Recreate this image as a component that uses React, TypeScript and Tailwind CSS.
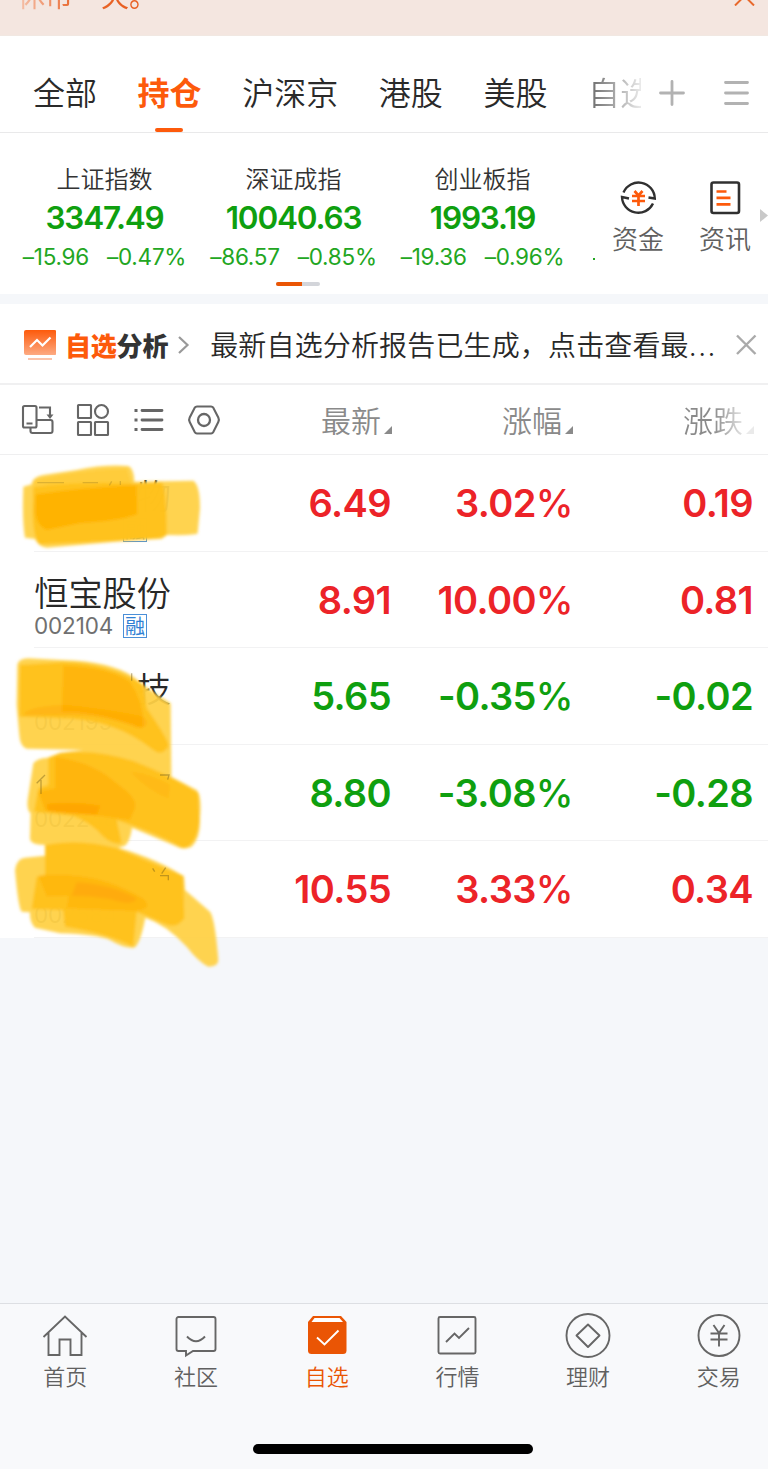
import React from "react";

const tabs = ["全部", "持仓", "沪深京", "港股", "美股"];

const indices = [
  { name: "上证指数", value: "3347.49", diff: "–15.96", pct: "–0.47%" },
  { name: "深证成指", value: "10040.63", diff: "–86.57", pct: "–0.85%" },
  { name: "创业板指", value: "1993.19", diff: "–19.36", pct: "–0.96%" },
];

const stocks = [
  { name: "物", code: "", price: "6.49", pct: "3.02", change: "0.19", up: true, badge: true },
  { name: "恒宝股份", code: "002104", price: "8.91", pct: "10.00", change: "0.81", up: true, badge: true },
  { name: "技", code: "002195", price: "5.65", pct: "-0.35", change: "-0.02", up: false, badge: false },
  { name: "", code: "002248", price: "8.80", pct: "-3.08", change: "-0.28", up: false, badge: false },
  { name: "", code: "002584", price: "10.55", pct: "3.33", change: "0.34", up: true, badge: false },
];

const Banner = () => (
  <div className="relative h-9 overflow-hidden border-b border-[#f1e8e2] bg-[#f4e6e0]">
    <p className="absolute -top-[25px] left-[17px] bg-linear-to-r from-[#f4c4ad] via-[#e8692c] via-40% to-[#e8591a] bg-clip-text text-[28px] leading-10 text-transparent">
      休市一天。
    </p>
    <svg className="absolute top-0 right-3 h-[6px] w-6" viewBox="0 0 24 6" fill="none" stroke="#e8692c" strokeWidth="2">
      <path d="M3 5.5L12.5 -4L22 5.5" />
    </svg>
  </div>
);

const TabBar = () => (
  <div className="flex h-[97px] items-center border-b border-[#e9e9ea] bg-white pl-[33px]">
    <div className="flex h-full w-[608px] shrink-0 gap-[40.6px] overflow-hidden text-[32px] leading-[110px] font-[350] text-[#2a2a2a]">
      {tabs.map((tab) =>
        tab === "持仓" ? (
          <div key={tab} className="relative shrink-0 font-bold text-[#fd5a0b]">
            {tab}
            <span className="absolute bottom-0 left-[17.5px] h-1 w-7 rounded-xs bg-[#fd5a0b]" />
          </div>
        ) : (
          <div key={tab} className="shrink-0">
            {tab}
          </div>
        )
      )}
      <div className="shrink-0 bg-linear-to-r from-[#777] from-10% to-white to-95% bg-clip-text text-transparent">
        自选
      </div>
    </div>
    <svg className="mt-[17px] ml-[17px] h-7 w-7 shrink-0" viewBox="0 0 28 28" stroke="#b2b2b2" strokeWidth="2.8" strokeLinecap="round">
      <path d="M2.5 14h23M14 2.5v23" />
    </svg>
    <svg className="mt-[17px] ml-[37px] h-7 w-7 shrink-0" viewBox="0 0 28 28" stroke="#b2b2b2" strokeWidth="2.8" strokeLinecap="round">
      <path d="M2.5 3.5h22M2.5 14h22M2.5 24.5h22" />
    </svg>
  </div>
);

const Indices = () => (
  <div className="relative flex h-[161px] bg-white">
    <div className="flex w-[600px] shrink-0 pl-[10px]">
      {indices.map((item) => (
        <div key={item.name} className="flex w-[189px] shrink-0 flex-col items-center pt-[30px] whitespace-nowrap">
          <div className="h-[30px] text-[24px] leading-[30px] font-[350] text-[#333]">{item.name}</div>
          <div className="mt-[6px] h-[38px] font-[Inter] text-[31.500px] leading-[38px] font-semibold tracking-[-1.200px] text-[#0f9f0f]">
            {item.value}
          </div>
          <div className="mt-[6px] flex h-7 gap-[18px] font-[Inter] text-[22.500px] leading-7 tracking-[-0.250px] text-[#22a622]">
            <span>{item.diff}</span>
            <span>{item.pct}</span>
          </div>
        </div>
      ))}
      <span className="mt-[125px] ml-4 h-0.5 w-0.5 shrink-0 bg-[#22a622]" />
    </div>
    <div className="mt-[45px] ml-3 w-[52px] shrink-0 text-center">
      <svg className="mx-auto h-10 w-10" viewBox="0 0 40 40" fill="none" stroke="#303030" strokeWidth="2.4">
        <path d="M5.500 14.500A16.300 16.300 0 0 1 36.800 20.500L30.500 19.500" />
        <path d="M35 25.500A16.300 16.300 0 0 1 4 19L11 20.500" />
        <path d="M16.500 13l4 4.500L24.500 13M14 18h13M14 23h13M20.500 18v10" stroke="#fd5a0b" strokeWidth="2.7" />
      </svg>
      <div className="text-[26px] leading-[40px] font-[350] text-[#606060]">资金</div>
    </div>
    <div className="mt-[45px] ml-[34px] w-[54px] shrink-0 text-center">
      <svg className="mx-auto h-10 w-10" viewBox="0 0 40 40" fill="none">
        <rect x="6.500" y="4.500" width="27.500" height="30.500" rx="2" stroke="#303030" strokeWidth="2.6" />
        <path d="M11.500 13.500h10M11.500 19.800h14M11.500 26.300h14" stroke="#fd5a0b" strokeWidth="2.7" />
      </svg>
      <div className="text-[26px] leading-[40px] font-[350] text-[#606060]">资讯</div>
    </div>
    <svg className="mt-[76px] ml-1.5 h-[13px] w-[10px] shrink-0" viewBox="0 0 10 13">
      <path d="M2 0L10 6.500L2 13z" fill="#c9c9c9" />
    </svg>
    <div className="absolute bottom-2 left-[276px] flex h-1 w-11 overflow-hidden rounded-sm bg-[#d3d5da]">
      <span className="w-[26px] bg-[#ea5504]" />
    </div>
  </div>
);

const Analysis = () => (
  <div className="mt-[10px] flex h-[81px] items-center border-b-2 border-[#f0f0f1] bg-white pt-0.5 pl-6 whitespace-nowrap">
    <svg className="h-8 w-8 shrink-0" viewBox="0 0 32 32" fill="none">
      <defs>
        <linearGradient id="chart-fill" x1="0" y1="0" x2="0" y2="1">
          <stop offset="0" stopColor="#fd5a0b" />
          <stop offset="1" stopColor="#fdaa82" />
        </linearGradient>
      </defs>
      <rect y="1" width="32.500" height="25" rx="2" fill="url(#chart-fill)" />
      <path d="M6 18l7-7 5.500 5.500 8-8" stroke="#fff" strokeWidth="2.200" />
      <path d="M4 30h24" stroke="#fbc4ab" strokeWidth="2" />
    </svg>
    <div className="ml-[9px] shrink-0 text-[26px] font-black tracking-[-0.200px] text-[#333]">
      <span className="text-[#fd5a0b]">自选</span>分析
    </div>
    <svg className="ml-[8px] h-5 w-4 shrink-0" viewBox="0 0 16 20" fill="none" stroke="#999" strokeWidth="2.200">
      <path d="M3 2l8.500 8L3 18" />
    </svg>
    <div className="ml-[18px] w-[509px] shrink-0 text-[28px] font-[350] tracking-[0.150px] text-[#282828]">
      最新自选分析报告已生成，点击查看最<span className="font-[Inter] tracking-[1.500px]">...</span>
    </div>
    <svg className="ml-[15px] h-6 w-6 shrink-0" viewBox="0 0 24 24" stroke="#aaa" strokeWidth="2.400">
      <path d="M3 2.500l18.500 18.500M21.500 2.500L3 21" />
    </svg>
  </div>
);

const Corner = () => (
  <svg className="mt-[20px] ml-[3px] h-2 w-2" viewBox="0 0 8 8">
    <path d="M8 0v8H0z" fill="currentColor" />
  </svg>
);

const TableHead = () => (
  <div className="flex h-[70px] items-center border-b border-[#efeff0] bg-white pl-5 text-[30px] font-[350] text-[#8a8a8a]">
    <svg className="h-9 w-[202px] shrink-0" viewBox="0 0 202 36" fill="none" stroke="#666" strokeWidth="2.100">
      <rect x="3" y="4" width="13.500" height="21.500" rx="1.500" />
      <path d="M6.500 21.500h6M19 5.500h11v9M17 18h13.500a2 2 0 0 1 2 2v9a2 2 0 0 1-2 2h-18a2 2 0 0 1-2-2v-3" />
      <path d="M26.500 12.500h7L30 17z" fill="#666" stroke="none" />
      <rect x="58" y="3" width="13" height="13" rx=".5" />
      <circle cx="81.500" cy="9.500" r="6.500" />
      <rect x="58" y="20" width="13" height="13" rx=".5" />
      <rect x="75" y="20" width="13" height="13" rx=".5" />
      <path d="M122 8.500h20M122 18h20M122 27.500h20" strokeWidth="2.800" strokeLinecap="round" />
      <path d="M114.500 8.500h3M114.500 18h3M114.500 27.500h3" strokeWidth="3" />
      <path d="M177 4.500h14a3 3 0 0 1 2.300 1.200l5 9.800a5 5 0 0 1 0 4.500l-5 10a3 3 0 0 1-2.300 1.500h-14a3 3 0 0 1-2.300-1.500l-5-10a5 5 0 0 1 0-4.500l5-9.800a3 3 0 0 1 2.300-1.200z" />
      <circle cx="184" cy="18" r="6" strokeWidth="2.300" />
    </svg>
    <div className="flex w-[170px] shrink-0 items-center justify-end">
      最新
      <Corner />
    </div>
    <div className="flex w-[181px] shrink-0 items-center justify-end">
      涨幅
      <Corner />
    </div>
    <div className="flex w-[181px] shrink-0 items-center justify-end">
      <span className="bg-linear-to-r from-[#8a8a8a] from-50% to-[#e5e5e5] bg-clip-text text-transparent">涨跌</span>
      <span className="text-[#eaeaea]">
        <Corner />
      </span>
    </div>
  </div>
);

// Highlighter strokes that cover the private rows.
const Scribbles = () => (
  <svg className="pointer-events-none absolute top-0 left-0 h-[520px] w-[260px]" viewBox="0 0 780 1560">
    <defs>
      <filter id="soft" x="-5%" y="-5%" width="110%" height="110%">
        <feGaussianBlur stdDeviation="5" />
      </filter>
    </defs>
    <g filter="url(#soft)">
      <g fill="#ffd045" fillOpacity=".94">
        <path d="M70 95L95 88Q97 65 130 60L230 45Q310 28 385 33Q402 40 403 80L580 77Q600 90 600 160L593 235Q590 242 500 240L485 252Q400 255 330 262L140 278Q115 275 105 252L75 248Q66 200 70 95z" />
        <path d="M52 630Q55 610 85 610L200 616Q330 620 400 665Q440 700 512 745L514 965L590 1005Q606 1020 600 1090Q602 1150 575 1175Q550 1188 520 1170L396 1118Q390 1160 375 1172L355 1178Q480 1215 552 1265L555 1305L630 1370Q645 1390 655 1515Q655 1535 625 1535Q595 1520 560 1475Q500 1410 436 1388Q420 1470 402 1478Q370 1480 330 1455Q290 1438 180 1435L105 1418Q88 1400 90 1372L65 1370Q55 1360 45 1245Q50 1210 75 1208L135 1202L135 1170Q90 1170 90 1150L92 1075Q80 1065 83 1035L100 925Q110 910 143 908L180 893L250 885L80 881Q60 875 58 840L50 750z" />
      </g>
      <g fill="#ffc117" fillOpacity=".9">
        <path d="M100 95Q240 80 405 86L485 82Q500 100 500 240Q490 252 400 255L120 268Q100 255 98 170z" />
        <path d="M100 90L102 75Q240 45 380 40L398 90z" fillOpacity=".35" />
        <path d="M60 630L190 622Q330 625 430 690L440 760Q510 860 505 875Q485 905 460 885Q340 790 180 790L58 785z" />
        <path d="M145 908L180 895Q280 880 400 918Q520 965 595 1015L598 1100Q590 1170 550 1180Q460 1130 350 1095L365 1165Q340 1170 310 1145Q270 1100 220 1083L102 1070L115 1000L145 990z" />
        <path d="M135 1170Q240 1150 350 1180L550 1262L553 1390Q530 1425 490 1405L410 1370L400 1475Q320 1435 195 1415L190 1365L95 1362L110 1265L135 1260z" />
      </g>
      <g fill="#ffb002" fillOpacity=".85">
        <path d="M108 118Q240 98 410 90L412 178Q360 198 240 205L140 225Q112 215 105 170z" />
        <path d="M190 632Q330 635 390 680Q430 740 430 800Q440 830 400 810Q280 770 185 770z" fillOpacity=".75" />
        <path d="M165 905Q280 920 350 985Q415 1030 405 1060L390 1095L280 1080L135 1067L115 1010L165 1000z" fillOpacity=".75" />
        <path d="M115 1262Q160 1255 230 1262Q330 1270 430 1330Q465 1365 400 1368L200 1360L205 1322L140 1325z" fillOpacity=".5" />
      </g>
      <g fill="#ff9d00" fillOpacity=".3">
        <path d="M70 780Q80 755 190 750Q300 760 430 785Q460 815 410 818Q320 780 210 780z" />
        <path d="M140 1048Q220 1038 300 1052L290 1080Q200 1075 145 1068z" fillOpacity=".6" />
        <path d="M230 1282Q340 1290 410 1330Q400 1355 330 1332Q270 1322 215 1322z" fillOpacity=".5" />
        <path d="M390 950Q450 955 510 990L505 1030Q450 1010 390 950z" fillOpacity=".2" />
      </g>
    </g>
    <g fill="none" stroke="#75601a" strokeOpacity=".45" strokeWidth="4">
      <path d="M112 83h80M248 83h46M335 79l-7 12M361 78v12" strokeOpacity=".25" />
      <path d="M395 655v22" />
      <path d="M110 985l25-25M123 975v42M480 960h27l-4 14" />
      <path d="M458 1240l6 10M497 1238l-12 18M480 1262h25v14" />
    </g>
  </svg>
);

const StockTable = () => (
  <div className="relative bg-white font-[Inter]">
    {stocks.map((stock) => (
      <div key={stock.price} className="flex h-[96.5px] pl-[34px]">
        <div className="w-[200px] shrink-0 border-b border-[#f2f2f3] pt-[19px]">
          <div className="h-[42px] w-[137px] text-right font-['Noto_Sans_CJK_SC'] text-[34.200px] leading-[40px] font-[350] whitespace-nowrap text-[#282828]">
            {stock.name}
          </div>
          <div className="flex h-[25px] items-center text-[22.500px] leading-[25px] tracking-[-0.150px] text-[#707070]">
            <span className="w-[89px]">{stock.code}</span>
            {stock.badge && (
              <span className="mt-0.5 h-6 w-6 border border-[#4a8fd8] text-center font-['Noto_Sans_CJK_SC'] text-[20px] leading-[21px] tracking-normal text-[#2f7fd4]">
                融
              </span>
            )}
          </div>
        </div>
        <div
          className={
            stock.up
              ? "flex flex-1 border-b border-[#f2f2f3] text-[38px] leading-[96px] font-semibold tracking-[-0.600px] text-[#ec2328]"
              : "flex flex-1 border-b border-[#f2f2f3] text-[38px] leading-[96px] font-semibold tracking-[-0.600px] text-[#0f9f0f]"
          }
        >
          <span className="w-[157px] text-right">{stock.price}</span>
          <span className="w-[182px] text-right">
            {stock.pct}
            <span className="font-medium">%</span>
          </span>
          <span className="w-[180px] text-right">{stock.change}</span>
        </div>
      </div>
    ))}
    <Scribbles />
  </div>
);

const navItems = [
  {
    label: "首页",
    icon: <path d="M1.500 24L23 3.500L44.500 24M6.500 20v22H17.500V26.500h11V42H39.500V20" />,
  },
  {
    label: "社区",
    icon: (
      <>
        <path d="M5.500 4h35a2 2 0 0 1 2 2v30a2 2 0 0 1-2 2H20l-7 4.500V38H5.500a2 2 0 0 1-2-2V6a2 2 0 0 1 2-2z" />
        <path d="M14 23.500q9 9.500 18 0" />
      </>
    ),
  },
  {
    label: "自选",
    active: true,
    icon: (
      <>
        <path d="M9 3h28l5.500 6v28.500a3.500 3.500 0 0 1-3.500 3.500H7.500A3.500 3.500 0 0 1 4 37.500V9z" fill="#ea5504" stroke="none" />
        <path d="M10.500 5h25l3.500 4H7.500z" fill="#fff" stroke="none" />
        <path d="M13 24.500l7.500 7L34.500 17.500" stroke="#fff" />
      </>
    ),
  },
  {
    label: "行情",
    icon: (
      <>
        <rect x="4.500" y="4" width="37" height="36.500" rx="1.500" />
        <path d="M12 29l8.500-8.500 4.500 4.500 10-10" />
      </>
    ),
  },
  {
    label: "理财",
    icon: (
      <>
        <circle cx="23" cy="22.500" r="21.500" />
        <path d="M23 11.500L34.500 22.500 23 34 11.500 22.500z" strokeLinejoin="round" />
      </>
    ),
  },
  {
    label: "交易",
    icon: (
      <>
        <circle cx="23" cy="22.500" r="20.500" />
        <path d="M17.500 12l5.500 8 5.500-8M14.500 20.500h17M14.500 26.500h17M23 20v13.500" />
      </>
    ),
  },
];

const BottomNav = () => (
  <nav className="mt-auto flex h-[166px] flex-col items-center border-t border-[#dddfe3] bg-[#f8f9fb]">
    <div className="flex w-full">
      {navItems.map((item) => (
        <div key={item.label} className="flex w-[130.700px] shrink-0 flex-col items-center pt-[9px]">
          <svg className="h-[46px] w-[46px]" viewBox="0 0 46 46" fill="none" stroke="#666" strokeWidth="1.900">
            {item.icon}
          </svg>
          <span
            className={
              item.active
                ? "text-[22px] leading-[33px] font-[350] text-[#ea5504]"
                : "text-[22px] leading-[33px] font-[350] text-[#606060]"
            }
          >
            {item.label}
          </span>
        </div>
      ))}
    </div>
    <div className="mt-auto mr-[-18px] mb-[15px] h-[10px] w-[280px] rounded-full bg-black" />
  </nav>
);

const App = () => {
  return (
    <div className="flex h-[1469px] w-[768px] flex-col overflow-hidden bg-[#f5f7fa] font-['Noto_Sans_CJK_SC',sans-serif]">
      <Banner />
      <TabBar />
      <Indices />
      <Analysis />
      <TableHead />
      <StockTable />
      <BottomNav />
    </div>
  );
};

export default App;
